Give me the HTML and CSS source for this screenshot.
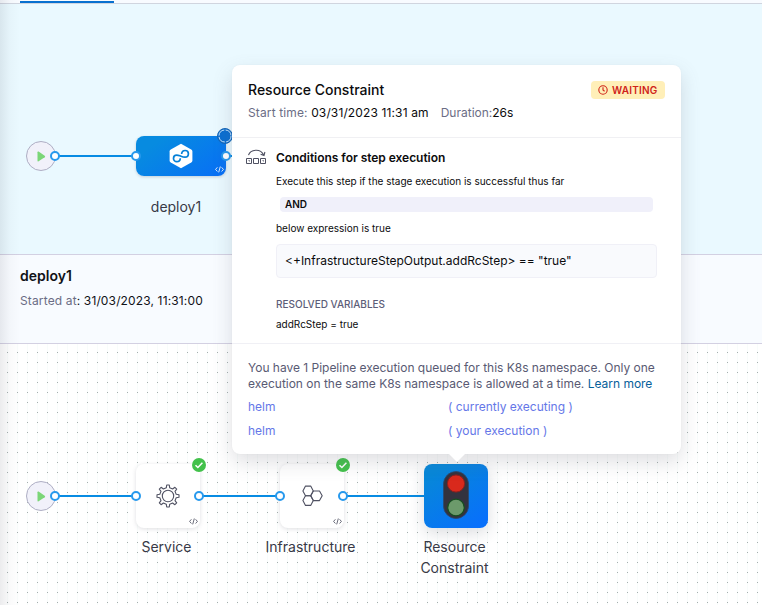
FILE: index.html
```html
<!DOCTYPE html>
<html lang="en">
<head>
<meta charset="utf-8">
<title>Pipeline execution</title>
<link rel="stylesheet" href="styles.css">
</head>
<body>
<svg class="defs" width="0" height="0" aria-hidden="true">
  <symbol id="code" viewBox="0 0 9 7"><path d="M2.4 1.3 .6 3.4l1.8 2.1M6.6 1.3l1.8 2.1-1.8 2.1M5.3.5 3.7 6.4" fill="none" stroke="currentColor" stroke-width=".85"/></symbol>
  <symbol id="play" viewBox="0 0 9 11"><path d="M.5 1.2Q.5.1 1.6.6L7.7 4.7Q8.7 5.5 7.7 6.3L1.6 10.2Q.5 10.8.5 9.8Z" fill="#7bd678"/></symbol>
  <symbol id="check" viewBox="0 0 14 14"><circle cx="7" cy="7" r="7" fill="#42c14b"/><path d="m3.5 7.2 2.4 2.3 4.5-4.7" fill="none" stroke="#fff" stroke-width="1.5"/></symbol>
</svg>
<main class="page">
  <nav class="tabs"><div class="tab"></div></nav>

  <section class="stages">
    <div class="link stage-link"></div>
    <div class="link stage-out"></div>
    <div class="start stage-start"><svg width="9" height="11"><use href="#play"/></svg></div>
    <div class="stage-card">
      <svg width="24" height="26" viewBox="0 0 24 26"><path d="M12 .8 22.2 6.5Q23.4 7.2 23.4 8.5V17.5Q23.4 18.8 22.2 19.5L12 25.2 1.8 19.5Q.6 18.8.6 17.5V8.5Q.6 7.2 1.8 6.5Z" fill="#fff"/><path d="M11.300 15.200C11.200 17.300 9.800 18.700 7.800 18.700 5.900 18.700 4.500 17.200 4.500 15.400 4.500 13.500 5.900 12.100 7.800 12.100 9.500 12.100 10.500 12.800 12 13.300 13.500 13.900 14.400 14.200 16 14.200 17.900 14.200 19.400 12.700 19.400 10.800 19.400 9 18 7.500 16.100 7.500 14.100 7.500 12.800 8.900 12.600 11" fill="none" stroke="#0580d8" stroke-width="1.700"/></svg>
      <svg class="code" width="9" height="7"><use href="#code"/></svg>
    </div>
    <i class="port p-a"></i><i class="port p-b"></i><i class="port p-c"></i>
    <svg class="running" width="16" height="16" viewBox="0 0 16 16"><circle cx="8" cy="8" r="7.500" fill="#0a6ed1" stroke="#1766b5"/><circle cx="8" cy="8" r="6" fill="none" stroke="#d6edff" stroke-width=".9" stroke-dasharray="8 1.400"/></svg>
    <div class="label stage-label">deploy1</div>
  </section>

  <section class="details">
    <h2>deploy1</h2>
    <p><span>Started at</span>: 31/03/2023, 11:31:00</p>
  </section>

  <section class="steps">
    <div class="link l-a"></div><div class="link l-b"></div><div class="link l-c"></div>
    <div class="start step-start"><svg width="9" height="11"><use href="#play"/></svg></div>
    <div class="step s-a">
      <svg width="24" height="24" viewBox="0 0 24 24" fill="none" stroke="#4f5162" stroke-width="1.100" stroke-linejoin="round"><circle cx="12" cy="12" r="5.700"/><path d="M10.300 3.800 10.700 1h2.600l.4 2.800 2.900 1.200 2.300-1.700 1.800 1.800L19 7.400l1.200 2.900 2.800.4v2.600l-2.800.4L19 16.600l1.700 2.300-1.800 1.800-2.300-1.700-2.900 1.200-.4 2.800h-2.600l-.4-2.800L7.400 19l-2.300 1.700-1.800-1.800L5 16.600l-1.200-2.900L1 13.300v-2.600l2.800-.4L5 7.400 3.300 5.100l1.800-1.800L7.400 5Z"/></svg>
      <svg class="code" width="9" height="7"><use href="#code"/></svg>
    </div>
    <div class="step s-b">
      <svg width="21" height="22" viewBox="0 0 21 22" fill="none" stroke="#4f5162" stroke-width="1.100" stroke-linejoin="round"><path d="M3.500 1.100h5.200l2.600 4.900-2.600 4.700H3.500L.9 6Z"/><path d="M3.500 10.700h5.200l2.600 4.900-2.600 4.800H3.500L.9 15.600Z"/><path d="M11.300 6h6.200l2.700 4.700-2.700 4.900h-6.200l-2.600-4.900Z"/></svg>
      <svg class="code" width="9" height="7"><use href="#code"/></svg>
    </div>
    <div class="step s-c">
      <svg width="26" height="48" viewBox="0 0 26 48"><rect x=".5" y=".5" width="25" height="47" rx="12.500" fill="#33333f" stroke="#29476f" stroke-width=".8"/><circle cx="13" cy="12.500" r="8.600" fill="#d9291c" stroke="#8d1f1d"/><circle cx="13" cy="36.500" r="8.300" fill="#6c9a6b" stroke="#164f20" stroke-width="1.300"/></svg>
    </div>
    <i class="port q-a"></i><i class="port q-b"></i><i class="port q-c"></i><i class="port q-d"></i><i class="port q-e"></i>
    <svg class="badge b-a" width="14" height="14"><use href="#check"/></svg>
    <svg class="badge b-b" width="14" height="14"><use href="#check"/></svg>
    <div class="label t-a">Service</div>
    <div class="label t-b">Infrastructure</div>
    <div class="label t-c">Resource<br>Constraint</div>
  </section>
  <div class="edge-shade"></div>

  <aside class="popover">
    <header class="pop-head">
      <div class="title-row">
        <h1>Resource Constraint</h1>
        <div class="status"><svg width="10" height="10" viewBox="0 0 10 10" fill="none" stroke="#cf2318" stroke-width="1.100"><circle cx="5" cy="5" r="4.200"/><path d="M5 2.300V5l1.600 1.300"/></svg><span>WAITING</span></div>
      </div>
      <div class="times"><p><span>Start time:</span> 03/31/2023 11:31 am</p><p><span>Duration:</span>26s</p></div>
    </header>
    <section class="conditions">
      <svg class="cond-icon" width="20" height="16" viewBox="0 0 20 16" fill="none" stroke="#4f5162"><path d="M2.500 6.200C4.500.2 14.500-.8 17.500 5.800M14.600 5.300l3.400 1.200.9-3.500" stroke-width="1.100"/><path d="M.5 9.500h5v5h-5ZM7.500 9.500h5v5h-5ZM14.500 9.500h5v5h-5Z"/><path d="M2.500 11.500h1v1M16.500 11.500h1v1" stroke-width=".8"/></svg>
      <div class="cond-body">
        <h3>Conditions for step execution</h3>
        <p class="small">Execute this step if the stage execution is successful thus far</p>
        <div class="and">AND</div>
        <p class="small">below expression is true</p>
        <div class="expression">&lt;+InfrastructureStepOutput.addRcStep&gt; == "true"</div>
        <h4>RESOLVED VARIABLES</h4>
        <p class="small variable">addRcStep = true</p>
      </div>
    </section>
    <section class="queue">
      <p>You have 1 Pipeline execution queued for this K8s namespace. Only one<br>execution on the same K8s namespace is allowed at a time. <a>Learn more</a></p>
      <div class="queue-row"><span>helm</span><span>( currently executing )</span></div>
      <div class="queue-row"><span>helm</span><span>( your execution )</span></div>
    </section>
  </aside>
</main>
</body>
</html>
```
FILE: styles.css
```css
* { box-sizing: border-box; }
body { margin: 0; font-family: Inter, "Liberation Sans", sans-serif; font-size: 12px; color: #111217; overflow: hidden; }
h1, h2, h3, h4, p { margin: 0; white-space: nowrap; }
svg { display: block; flex: none; }
.defs { position: absolute; }
.page { position: relative; width: 762px; height: 605px; display: flex; flex-direction: column; overflow: hidden; background: #fff; }

.tabs { height: 4px; padding: 1px 20px 0; background: #f8fbff; border-bottom: 1px solid #d0d5df; }
.tab { width: 94px; height: 2px; background: #0870cf; }
.stages { position: relative; height: 251px; background: #eaf9ff; border-bottom: 1px solid #d3d0e2; }
.details { height: 89px; padding: 11px 20px; background: #f8fbff; border-bottom: 1px solid #d3d0e2; }
.details h2 { font-size: 14px; line-height: 20px; font-weight: 600; }
.details p { margin-top: 7px; font-size: 12px; line-height: 16px; letter-spacing: .14px; }
.details span { color: #6b6d85; }
.steps { position: relative; flex: 1; background-color: #fff; background-image: radial-gradient(circle at .5px .5px, #a5adad .7px, transparent .8px), linear-gradient(90deg, #f8fcfb 1px, transparent 1px); background-size: 10px 10px; background-position: 7px 8px, 7px 0; }
.edge-shade { position: absolute; left: 0; top: 0; width: 20px; height: 605px; background: linear-gradient(90deg, rgba(40,41,61,.09), rgba(40,41,61,.025) 50%, transparent); }

.link { position: absolute; height: 2px; background: #078be3; }
.start { position: absolute; left: 26px; width: 30px; height: 30px; border: 1px solid #aeaec4; border-radius: 50%; background: #f1f1fa; display: flex; align-items: center; justify-content: center; }
.port { position: absolute; width: 10px; height: 10px; border: 2px solid #2799ed; border-radius: 50%; background: #fff; }
.label { position: absolute; font-size: 14px; line-height: 21px; text-align: center; color: #383946; white-space: nowrap; transform: translateX(-50%); }
.stage-start { top: 137px; }
.stage-link { left: 56px; top: 151px; width: 80px; }
.stage-out { left: 226px; top: 151px; width: 14px; }
.stage-card { position: absolute; left: 136px; top: 132px; width: 90px; height: 40px; border-radius: 8px; background: linear-gradient(145deg, #078be0 20%, #0870f5 95%); display: flex; align-items: center; justify-content: center; box-shadow: 0 1px 3px rgba(40,41,61,.2); }
.code { position: absolute; right: 2px; bottom: 3px; color: #4f5162; }
.p-a { left: 50px; top: 147px; }
.p-b { left: 131px; top: 147px; }
.p-c { left: 221px; top: 147px; }
.stage-card .code { color: #fff; right: 2px; }
.running { position: absolute; left: 217px; top: 124px; }
.stage-label { left: 176px; top: 192px; }

.step-start { top: 137px; }
.l-a { left: 56px; top: 151px; width: 80px; }
.l-b { left: 200px; top: 151px; width: 80px; }
.l-c { left: 344px; top: 151px; width: 80px; }
.step { position: absolute; top: 120px; width: 64px; height: 64px; border-radius: 8px; background: #fff; display: flex; align-items: center; justify-content: center; box-shadow: 0 1px 4px rgba(96,97,112,.2); }
.s-a { left: 136px; }
.s-b { left: 280px; }
.s-c { left: 424px; background: linear-gradient(145deg, #0787d9 15%, #0870fb 90%); box-shadow: 0 5px 16px rgba(40,41,61,.16); padding-bottom: 2px; }
.q-a { left: 50px; top: 147px; }
.q-b { left: 131px; top: 147px; }
.q-c { left: 194px; top: 147px; }
.q-d { left: 275px; top: 147px; }
.q-e { left: 338px; top: 147px; }
.badge { position: absolute; top: 114px; }
.b-a { left: 192px; }
.b-b { left: 336px; }
.t-a { left: 166.5px; top: 192px; }
.t-b { left: 310.5px; top: 192px; }
.t-c { left: 454.5px; top: 192px; }

.popover { position: absolute; left: 232px; top: 65px; width: 449px; height: 389px; border-radius: 8px; background: #fff; color: #0b0b0d; box-shadow: 0 0 2px rgba(40,41,61,.04), 0 8px 20px rgba(96,97,112,.2); }
.popover::after { content: ""; position: absolute; left: 217px; top: 389px; border: 8px solid transparent; border-top-color: #fff; border-bottom: 0; }
.pop-head { height: 73px; padding: 15px 16px 0; border-bottom: 1px solid #f0f0f3; }
.title-row { display: flex; justify-content: space-between; align-items: center; height: 20px; }
.title-row h1 { font-size: 14px; font-weight: 500; line-height: 20px; }
.status { height: 18px; width: 74px; border-radius: 4px; background: #ffefb8; color: #cf2318; display: flex; align-items: center; padding-left: 7px; gap: 4px; font-size: 10px; font-weight: 600; letter-spacing: .2px; }
.times { display: flex; gap: 12px; margin-top: 5px; line-height: 16px; letter-spacing: .13px; }
.times p + p { letter-spacing: 0; }
.times span { color: #6b6d85; }
.conditions { height: 206px; padding: 10px 14px 0; display: flex; gap: 10px; border-bottom: 1px solid #f0f0f5; }
.cond-icon { margin-top: 1px; }
.cond-body { width: 381px; }
.cond-body h3 { font-size: 12px; line-height: 20px; font-weight: 600; letter-spacing: -.04px; }
.small { font-size: 10px; line-height: 16px; margin-top: 5px; }
.and { margin: 8px 4px 0; height: 15px; padding-left: 5px; font-size: 10px; line-height: 15px; font-weight: 600; border-radius: 4px; background: #f0f0fa; }
.and + .small { margin-top: 8px; }
.expression { margin-top: 8px; height: 34px; padding-left: 8px; line-height: 32px; font-size: 12px; border: 1px solid #f0f0f7; border-radius: 4px; background: #f9fafd; white-space: nowrap; }
.cond-body h4 { margin-top: 18px; font-size: 10px; line-height: 16px; font-weight: 500; color: #5c5d78; }
.cond-body .variable { margin-top: 4px; }
.queue { padding: 16px 16px 0; color: #595a73; line-height: 16px; }
.queue p { letter-spacing: -.015px; }
.queue a { color: #06609b; }
.queue-row { display: grid; grid-template-columns: 200px 1fr; margin-top: 8px; color: #6577e8; height: 16px; }
.queue p + .queue-row { margin-top: 7px; }
```
